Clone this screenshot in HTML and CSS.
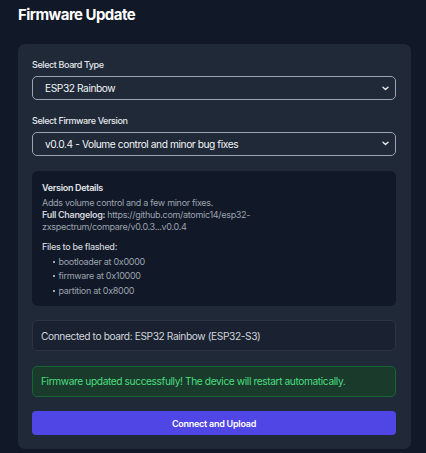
FILE: index.html
```html
<!DOCTYPE html>
<html>
<head>
<meta charset="utf-8">
<link rel="stylesheet" href="styles.css">
</head>
<body>
<h1 class="title">Firmware Update</h1>
<div class="card">
  <label class="label">Select Board Type</label>
  <div class="select">
    <span>ESP32 Rainbow</span>
    <svg class="chev" width="7" height="5" viewBox="0 0 7 5"><path d="M1 1.2 L3.5 3.6 L6 1.2" fill="none" stroke="#e5e7eb" stroke-width="1.4" stroke-linecap="round" stroke-linejoin="round"/></svg>
  </div>
  <label class="label second">Select Firmware Version</label>
  <div class="select">
    <span>v0.0.4 - Volume control and minor bug fixes</span>
    <svg class="chev" width="7" height="5" viewBox="0 0 7 5"><path d="M1 1.2 L3.5 3.6 L6 1.2" fill="none" stroke="#e5e7eb" stroke-width="1.4" stroke-linecap="round" stroke-linejoin="round"/></svg>
  </div>
  <div class="details">
    <div class="details-title">Version Details</div>
    <p class="notes">Adds volume control and a few minor fixes.<br><strong>Full Changelog:</strong> https://github.com/atomic14/esp32-<br>zxspectrum/compare/v0.0.3...v0.0.4</p>
    <div class="files-title">Files to be flashed:</div>
    <ul class="files">
      <li>bootloader at 0x0000</li>
      <li>firmware at 0x10000</li>
      <li>partition at 0x8000</li>
    </ul>
  </div>
  <div class="status">Connected to board: ESP32 Rainbow (ESP32-S3)</div>
  <div class="success">Firmware updated successfully! The device will restart automatically.</div>
  <button class="btn">Connect and Upload</button>
</div>
</body>
</html>
```
FILE: styles.css
```css
html, body {
  margin: 0;
  background: #111827;
}
body {
  padding: 5px 15px 0 18px;
  font-family: Inter, "Noto Sans", sans-serif;
  color: #e5e7eb;
}
.title {
  margin: 0;
  font-size: 15px;
  line-height: 20px;
  font-weight: 700;
  color: #ffffff;
  letter-spacing: -0.55px;
}
.card {
  margin-top: 19px;
  width: 393px;
  box-sizing: border-box;
  background: #1f2937;
  border-radius: 7px;
  padding: 14px 15px 14px 14px;
  display: flex;
  flex-direction: column;
}
.label {
  font-size: 9px;
  line-height: 13.5px;
  font-weight: 500;
  color: #e5e7eb;
  margin-bottom: 4.5px;
  letter-spacing: -0.4px;
}
.label.second {
  margin-top: 13.5px;
}
.select {
  height: 24px;
  box-sizing: border-box;
  border: 1px solid #9ca3af;
  border-radius: 5px;
  display: flex;
  align-items: center;
  justify-content: space-between;
  padding: 0 6px 0 12px;
  font-size: 10.2px;
  letter-spacing: -0.42px;
  color: #f3f4f6;
}
.chev {
  display: block;
}
.details {
  margin-top: 15px;
  background: #111827;
  border-radius: 6px;
  padding: 10px 10px 9px 10px;
  font-size: 9px;
  line-height: 12px;
  letter-spacing: -0.3px;
  color: #9ca3af;
}
.details-title {
  font-weight: 600;
  color: #e5e7eb;
  line-height: 13.5px;
  margin-bottom: 3px;
}
.notes {
  margin: 0;
}
.notes strong {
  color: #d1d5db;
  font-weight: 600;
}
.files-title {
  margin-top: 8px;
  font-weight: 500;
  color: #d1d5db;
}
.files {
  list-style: none;
  margin: 0;
  padding: 0 0 0 11px;
}
.files li {
  display: flex;
  align-items: center;
  margin-top: 2.5px;
}
.files li::before {
  content: "";
  width: 2px;
  height: 2px;
  background: #9ca3af;
  margin-right: 3.5px;
}
.status {
  margin-top: 14.5px;
  height: 31px;
  box-sizing: border-box;
  border: 1px solid #2b3544;
  background: #1a2231;
  border-radius: 5px;
  padding: 0 8px;
  display: flex;
  align-items: center;
  font-size: 10.2px;
  letter-spacing: -0.4px;
  color: #d1d5db;
}
.success {
  margin-top: 14.5px;
  height: 31px;
  box-sizing: border-box;
  border: 1px solid #166534;
  background: #1a3a2c;
  border-radius: 5px;
  padding: 0 8px;
  display: flex;
  align-items: center;
  font-size: 10.2px;
  letter-spacing: -0.4px;
  color: #4ade80;
}
.btn {
  margin-top: 14.5px;
  height: 24px;
  border: 0;
  border-radius: 4px;
  background: #4f46e5;
  color: #ffffff;
  font-family: Inter, "Noto Sans", sans-serif;
  font-size: 9px;
  font-weight: 600;
  letter-spacing: -0.25px;
  padding: 0;
}
```
